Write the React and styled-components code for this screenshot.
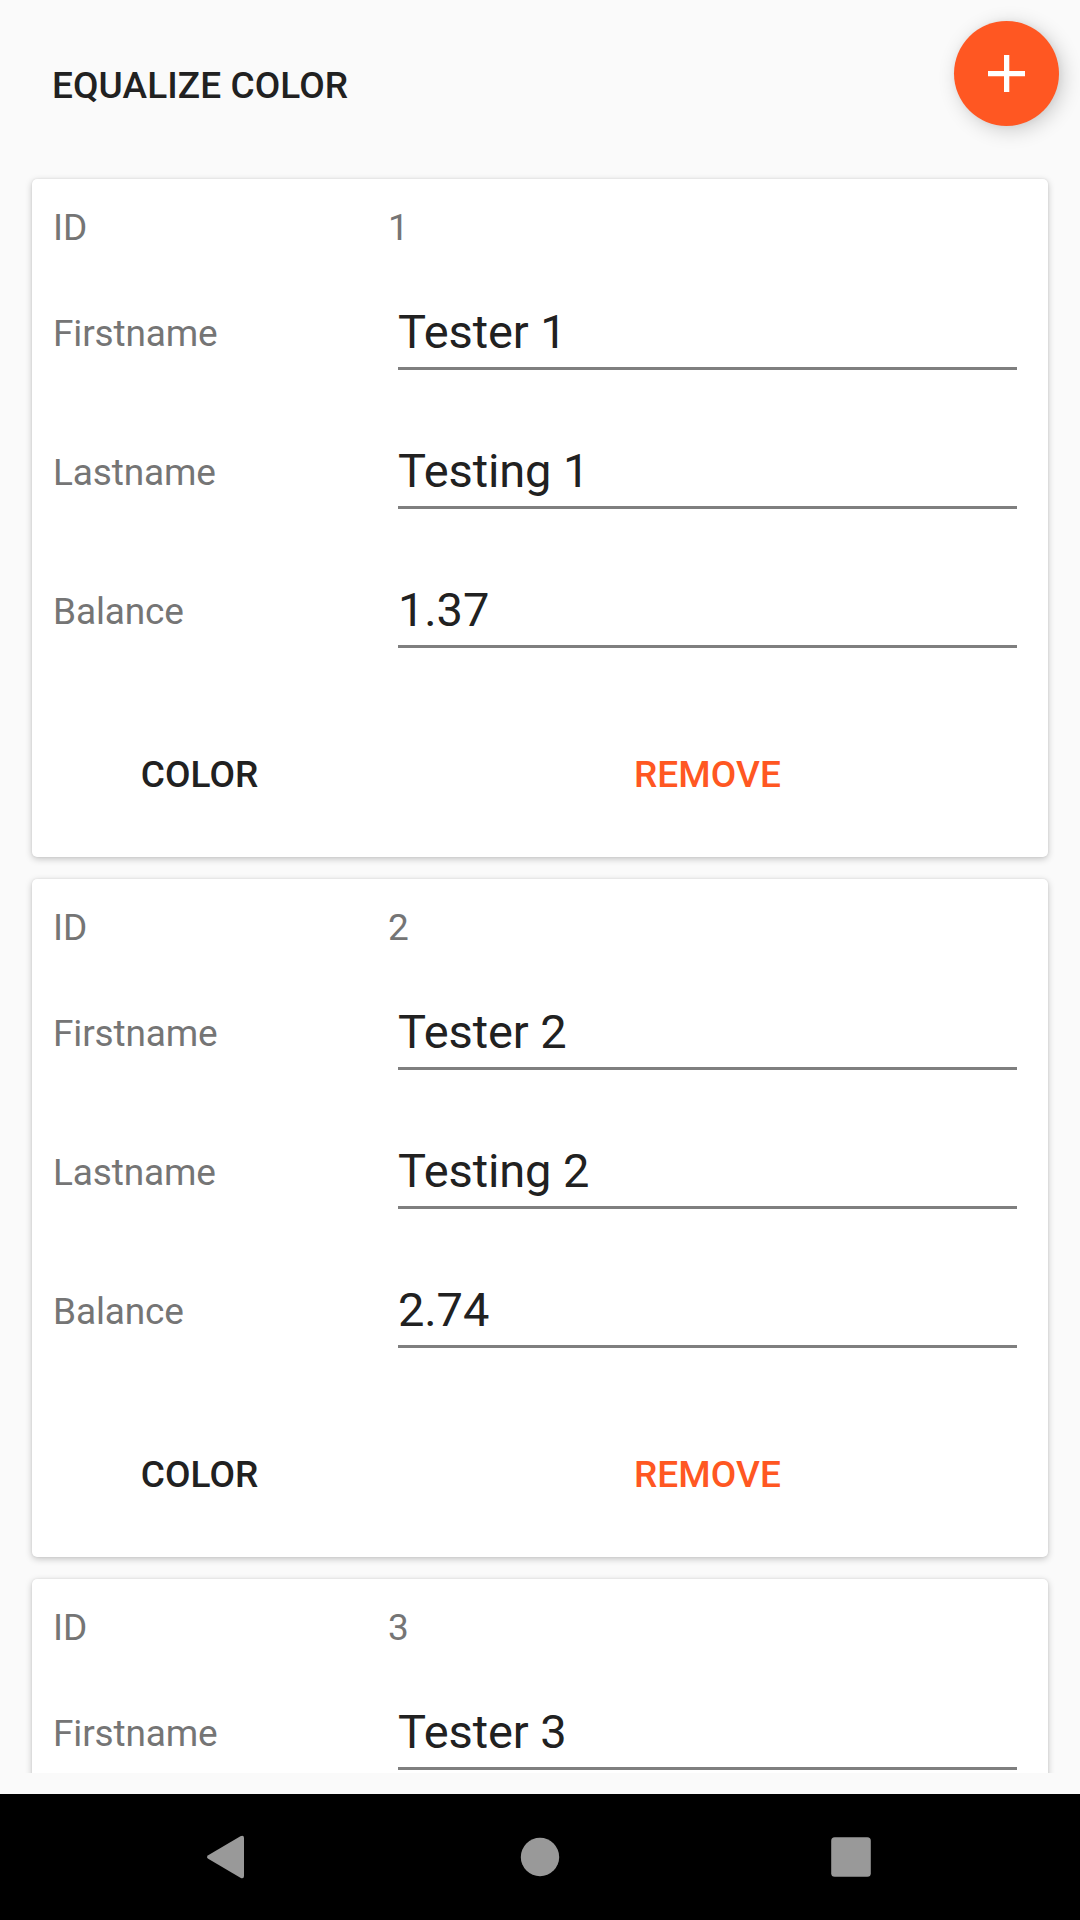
import React from "react";
import styled, { createGlobalStyle } from "styled-components";

const GlobalStyle = createGlobalStyle`
  * { box-sizing: border-box; }
  body {
    margin: 0;
    background: #fafafa;
    font-family: Roboto, "Noto Sans", sans-serif;
  }
`;

const Screen = styled.div`
  display: flex;
  flex-direction: column;
  width: 1080px;
  height: 1920px;
  overflow: hidden;
  background: #fafafa;
`;

const Header = styled.header`
  display: flex;
  justify-content: space-between;
  align-items: flex-start;
  flex: none;
  height: 168px;
  padding: 21px 21px 0 52px;
`;

const TextButton = styled.button`
  margin: 0;
  padding: 0;
  border: 0;
  background: none;
  font: 500 37px/43px Roboto, "Noto Sans", sans-serif;
  letter-spacing: 0.1px;
  color: ${(p) => (p.$accent ? "#ff5722" : "#212121")};
  white-space: nowrap;
`;

const EqualizeButton = styled(TextButton)`
  margin-top: 43px;
`;

const Fab = styled.button`
  display: flex;
  align-items: center;
  justify-content: center;
  width: 105px;
  height: 105px;
  padding: 0;
  border: 0;
  border-radius: 50%;
  background: #ff5722;
  box-shadow: 4px 4px 20px rgba(0, 0, 0, 0.19), 1px 0 6px rgba(0, 0, 0, 0.05);
`;

const List = styled.main`
  display: flex;
  flex-direction: column;
  gap: 22px;
  flex: none;
  height: 1605px;
  padding: 11px 32px 0;
  overflow: hidden;
`;

const Card = styled.section`
  flex: none;
  height: 678px;
  padding: 27px 21px 0;
  border-radius: 5px;
  background: #fff;
  box-shadow: 0 2px 7px rgba(0, 0, 0, 0.22), 0 0 2px rgba(0, 0, 0, 0.1);
`;

const Row = styled.div`
  display: grid;
  grid-template-columns: 335px 1fr;
  align-items: start;
  height: ${(p) => p.$height}px;
`;

const Label = styled.span`
  padding-top: ${(p) => p.$top || 0}px;
  font-size: 37px;
  line-height: 43px;
  letter-spacing: -0.14px;
  color: #757575;
`;

const Input = styled.div`
  margin: 27px 10px 0;
  padding-bottom: 8px;
  border-bottom: 3px solid #7f7f7f;
  font-size: 47px;
  line-height: 55px;
  letter-spacing: -0.1px;
  color: #212121;
`;

const Actions = styled.div`
  display: grid;
  grid-template-columns: 293px 639px;
  column-gap: 42px;
  justify-items: center;
  padding-top: 59px;
`;

const NavBar = styled.nav`
  display: flex;
  align-items: center;
  justify-content: space-between;
  flex: none;
  height: 126px;
  margin-top: 21px;
  padding: 0 187px;
  background: #000;
`;

const NavIcon = styled.svg`
  display: block;
  width: 84px;
  height: 84px;
  fill: #999;
`;

const people = [
  { id: 1, first: "Tester 1", last: "Testing 1", balance: "1.37" },
  { id: 2, first: "Tester 2", last: "Testing 2", balance: "2.74" },
  { id: 3, first: "Tester 3" },
];

function Field({ label, value }) {
  return (
    <Row $height={139}>
      <Label $top={35}>{label}</Label>
      <Input>{value}</Input>
    </Row>
  );
}

function PersonCard({ person }) {
  return (
    <Card>
      <Row $height={71}>
        <Label>ID</Label>
        <Label>{person.id}</Label>
      </Row>
      <Field label="Firstname" value={person.first} />
      {person.last && (
        <>
          <Field label="Lastname" value={person.last} />
          <Field label="Balance" value={person.balance} />
          <Actions>
            <TextButton>COLOR</TextButton>
            <TextButton $accent>REMOVE</TextButton>
          </Actions>
        </>
      )}
    </Card>
  );
}

export default function App() {
  return (
    <>
      <GlobalStyle />
      <Screen>
        <Header>
          <EqualizeButton>EQUALIZE COLOR</EqualizeButton>
          <Fab aria-label="Add">
            <svg width="105" height="105" viewBox="0 0 105 105" fill="#fff">
              <path d="M50 34h5.3v16h15.7v5.3H55.3V71H50V55.3H34V50h16z" />
            </svg>
          </Fab>
        </Header>
        <List>
          {people.map((p) => (
            <PersonCard key={p.id} person={p} />
          ))}
        </List>
        <NavBar>
          <NavIcon viewBox="0 0 84 84">
            <path d="M21.2 40.2 53.4 21.2Q57 19.6 57 23V61Q57 64.4 53.4 62.8L21.2 43.8Q18.8 42 21.2 40.2Z" />
          </NavIcon>
          <NavIcon viewBox="0 0 84 84">
            <circle cx="42" cy="42" r="19.2" />
          </NavIcon>
          <NavIcon viewBox="0 0 84 84">
            <rect x="22.2" y="22.2" width="39.6" height="39.6" rx="3.5" />
          </NavIcon>
        </NavBar>
      </Screen>
    </>
  );
}
